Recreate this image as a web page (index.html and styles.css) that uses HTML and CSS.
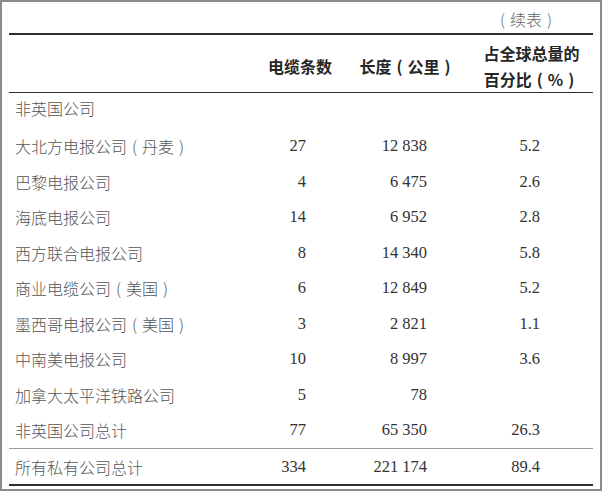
FILE: index.html
```html
<!DOCTYPE html>
<html lang="zh-CN">
<head>
<meta charset="utf-8">
<title>续表</title>
<link rel="stylesheet" href="styles.css">
</head>
<body>
<div class="frame">
  <div class="caption"><span class="pr">(</span>续表<span class="pr">)</span></div>
  <div class="table">
    <div class="head">
      <div class="hcell"></div>
      <div class="hcell">电缆条数</div>
      <div class="hcell">长度<span class="pr">(</span>公里<span class="pr">)</span></div>
      <div class="hcell">占全球总量的<br>百分比<span class="pr">(</span>%<span class="pr">)</span></div>
    </div>
    <div class="body">
      <div class="row group"><div class="name">非英国公司</div><div class="num c2"></div><div class="num c3"></div><div class="num c4"></div></div>
      <div class="row"><div class="name">大北方电报公司<span class="pr">(</span>丹麦<span class="pr">)</span></div><div class="num c2">27</div><div class="num c3">12 838</div><div class="num c4">5.2</div></div>
      <div class="row"><div class="name">巴黎电报公司</div><div class="num c2">4</div><div class="num c3">6 475</div><div class="num c4">2.6</div></div>
      <div class="row"><div class="name">海底电报公司</div><div class="num c2">14</div><div class="num c3">6 952</div><div class="num c4">2.8</div></div>
      <div class="row"><div class="name">西方联合电报公司</div><div class="num c2">8</div><div class="num c3">14 340</div><div class="num c4">5.8</div></div>
      <div class="row"><div class="name">商业电缆公司<span class="pr">(</span>美国<span class="pr">)</span></div><div class="num c2">6</div><div class="num c3">12 849</div><div class="num c4">5.2</div></div>
      <div class="row"><div class="name">墨西哥电报公司<span class="pr">(</span>美国<span class="pr">)</span></div><div class="num c2">3</div><div class="num c3">2 821</div><div class="num c4">1.1</div></div>
      <div class="row"><div class="name">中南美电报公司</div><div class="num c2">10</div><div class="num c3">8 997</div><div class="num c4">3.6</div></div>
      <div class="row"><div class="name">加拿大太平洋铁路公司</div><div class="num c2">5</div><div class="num c3">78</div><div class="num c4"></div></div>
      <div class="row"><div class="name">非英国公司总计</div><div class="num c2">77</div><div class="num c3">65 350</div><div class="num c4">26.3</div></div>
    </div>
    <div class="total">
      <div class="row"><div class="name">所有私有公司总计</div><div class="num c2">334</div><div class="num c3">221 174</div><div class="num c4">89.4</div></div>
    </div>
  </div>
</div>
</body>
</html>
```

FILE: styles.css
```css
html, body {
  margin: 0;
  padding: 0;
  background: #ffffff;
}

.frame {
  box-sizing: border-box;
  width: 602px;
  height: 491px;
  border: 2px solid #8c8c8c;
  padding: 0 7px;
  background: #ffffff;
}

.caption {
  height: 31px;
  box-sizing: border-box;
  padding: 6px 36px 0 0;
  text-align: right;
  font-family: "Noto Sans CJK SC", sans-serif;
  font-weight: 300;
  font-size: 16px;
  line-height: 22px;
  color: #666;
}

.pr {
  padding: 0 5px;
}

.table {
  border-top: 2px solid #2e2e2e;
  border-bottom: 2px solid #2e2e2e;
}

.head {
  display: grid;
  grid-template-columns: 246px 90px 125px 123px;
  align-items: center;
  box-sizing: border-box;
  height: 58px;
  padding: 5px 0 1px;
  border-bottom: 1px solid #2e2e2e;
}

.hcell {
  text-align: center;
  font-family: "Noto Sans CJK SC", sans-serif;
  font-weight: 700;
  font-size: 16px;
  line-height: 26px;
  color: #262626;
}

.body {
  border-bottom: 1px solid #9a9a9a;
}

.row {
  display: grid;
  grid-template-columns: 246px 90px 125px 123px;
  align-items: center;
  height: 35.5px;
}

.row.group {
  align-items: start;
  box-sizing: border-box;
  padding-top: 5px;
}

.name {
  padding-left: 6px;
  font-family: "Noto Sans CJK SC", sans-serif;
  font-weight: 300;
  font-size: 16px;
  line-height: 20px;
  color: #555;
  white-space: nowrap;
}

.num {
  text-align: right;
  font-family: "Liberation Serif", "Times New Roman", serif;
  font-size: 16.5px;
  line-height: 20px;
  color: #333;
}

.c2 { padding-right: 39px; }
.c3 { padding-right: 43px; }
.c4 { padding-right: 53px; }

.total .row {
  height: 35px;
}
```
